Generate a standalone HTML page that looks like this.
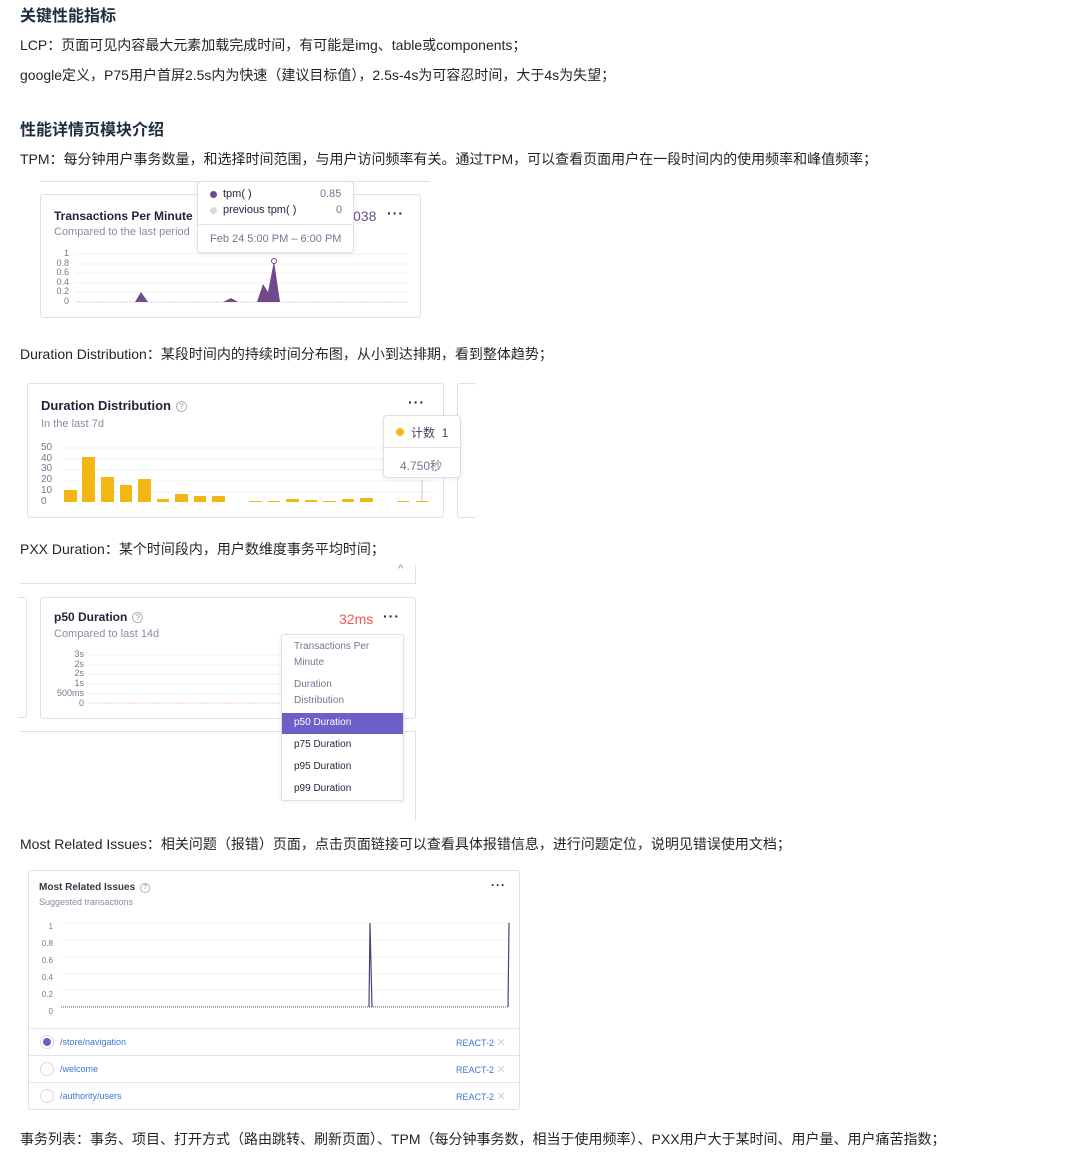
<!DOCTYPE html>
<html><head><meta charset="utf-8"><style>
*{margin:0;padding:0;box-sizing:border-box}
body{width:1078px;height:1161px;background:#fff;position:relative;overflow:hidden;font-family:"Liberation Sans","Noto Sans CJK SC",sans-serif;color:#1f2329}
.a{position:absolute;white-space:nowrap}
.t{font-size:14px;color:#1f2329}
.h{font-size:16px;font-weight:bold;color:#1f2d3d}
.card{position:absolute;border:1px solid #e2dee6;border-radius:3px;background:#fff}
.tt{font-size:12px;color:#2b1d38}
.sub{font-size:11px;color:#9386a0}
.ax{font-size:9px;color:#80708f;text-align:right;line-height:9.5px}
.dots{font-size:14px;color:#2b1d38;letter-spacing:1px;font-weight:bold}
.q{display:inline-block;width:11px;height:11px;border:1px solid #b5adbd;border-radius:50%;font-size:8px;color:#b5adbd;text-align:center;line-height:9px;vertical-align:1px;margin-left:5px}
</style></head><body>
<div class="a h" style="left:20px;top:2px">关键性能指标</div>
<div class="a t" style="left:20px;top:35px">LCP：页面可见内容最大元素加载完成时间，有可能是img、table或components；</div>
<div class="a t" style="left:20px;top:65px">google定义，P75用户首屏2.5s内为快速（建议目标值），2.5s-4s为可容忍时间，大于4s为失望；</div>
<div class="a h" style="left:20px;top:116px">性能详情页模块介绍</div>
<div class="a t" style="left:20px;top:149px">TPM：每分钟用户事务数量，和选择时间范围，与用户访问频率有关。通过TPM，可以查看页面用户在一段时间内的使用频率和峰值频率；</div>

<!-- card 1 -->
<div class="a" style="left:40px;top:181px;width:390px;height:1px;background:#e2dee6"></div>
<div class="card" style="left:40px;top:194px;width:381px;height:124px">
 <div class="a tt" style="left:13px;top:14px;font-weight:bold">Transactions Per Minute</div>
 <div class="a sub" style="left:13px;top:31px">Compared to the last period</div>
 <div class="a" style="left:312px;top:13px;font-size:14px;color:#6c4f8a">038</div>
 <div class="a dots" style="left:346px;top:10px">···</div>
 <div class="a ax" style="left:10px;top:54px;width:18px">1<br>0.8<br>0.6<br>0.4<br>0.2<br>0</div>
 <svg class="a" style="left:0;top:0" width="381" height="124">
  <g stroke="#f2eff5" stroke-width="1"><line x1="34" y1="59" x2="367" y2="59"/><line x1="34" y1="69" x2="367" y2="69"/><line x1="34" y1="78" x2="367" y2="78"/><line x1="34" y1="88" x2="367" y2="88"/><line x1="34" y1="97" x2="367" y2="97"/></g>
  <line x1="34" y1="107" x2="367" y2="107" stroke="#d8cfe0" stroke-dasharray="2 1"/>
  <path d="M94 107 L100 97 L107 107Z M182 107 L190 103 L197 107Z M216 107 L222 89 L227 97 L233 66 L239 107Z" fill="#6f4a8c"/>
  <circle cx="233" cy="66" r="2.5" fill="#fff" stroke="#6f4a8c"/>
 </svg>
</div>
<div class="card" style="left:197px;top:181px;width:157px;height:72px;border-radius:4px;box-shadow:0 1px 4px rgba(0,0,0,.08)">
 <div class="a" style="left:12px;top:9px;width:7px;height:7px;border-radius:50%;background:#6f4a8c"></div>
 <div class="a tt" style="left:25px;top:6px;font-size:11px">tpm( )</div>
 <div class="a" style="left:122px;top:6px;font-size:11px;color:#80708f">0.85</div>
 <div class="a" style="left:12px;top:25px;width:7px;height:7px;border-radius:50%;background:#dcd8e0"></div>
 <div class="a tt" style="left:25px;top:22px;font-size:11px">previous tpm( )</div>
 <div class="a" style="left:138px;top:22px;font-size:11px;color:#80708f">0</div>
 <div class="a" style="left:0;top:42px;width:155px;height:1px;background:#e7e3ea"></div>
 <div class="a" style="left:12px;top:51px;font-size:11px;color:#80708f">Feb 24 5:00 PM – 6:00 PM</div>
</div>

<div class="a t" style="left:20px;top:344px">Duration Distribution：某段时间内的持续时间分布图，从小到达排期，看到整体趋势；</div>
<!-- card 2 -->
<div class="card" style="left:27px;top:383px;width:417px;height:135px">
 <div class="a tt" style="left:13px;top:14px;font-size:13px;font-weight:bold">Duration Distribution<span class="q">?</span></div>
 <div class="a sub" style="left:13px;top:34px">In the last 7d</div>
 <div class="a dots" style="left:380px;top:10px">···</div>
 <div class="a ax" style="left:13px;top:59px;width:20px;font-size:10px;line-height:10.7px;text-align:left;color:#80708f">50<br>40<br>30<br>20<br>10<br>0</div>
 <svg class="a" style="left:0;top:0" width="417" height="135">
  <g stroke="#f2eff5"><line x1="34" y1="64" x2="405" y2="64"/><line x1="34" y1="75" x2="405" y2="75"/><line x1="34" y1="86" x2="405" y2="86"/><line x1="34" y1="97" x2="405" y2="97"/><line x1="34" y1="108" x2="405" y2="108"/></g>
  <g fill="#f2b712">
   <rect x="36" y="106" width="13" height="12"/><rect x="54" y="73" width="13" height="45"/><rect x="73" y="93" width="13" height="25"/><rect x="92" y="101" width="12" height="17"/><rect x="110" y="95" width="13" height="23"/><rect x="129" y="115" width="12" height="3"/><rect x="147" y="110" width="13" height="8"/><rect x="166" y="112" width="12" height="6"/><rect x="184" y="112" width="13" height="6"/><rect x="221" y="117" width="13" height="1"/><rect x="240" y="117" width="12" height="1"/><rect x="258" y="115" width="13" height="3"/><rect x="277" y="116" width="12" height="2"/><rect x="295" y="117" width="13" height="1"/><rect x="314" y="115" width="12" height="3"/><rect x="332" y="114" width="13" height="4"/><rect x="369" y="117" width="12" height="1"/><rect x="388" y="117" width="12" height="1"/>
  </g>
  <line x1="394" y1="96" x2="394" y2="117" stroke="#c9c2d0"/>
 </svg>
</div>
<div class="card" style="left:457px;top:383px;width:20px;height:135px;border-right:none"></div>
<div class="card" style="left:383px;top:415px;width:78px;height:63px;border-radius:4px;box-shadow:0 1px 4px rgba(0,0,0,.08)">
 <div class="a" style="left:12px;top:12px;width:8px;height:8px;border-radius:50%;background:#f2b712"></div>
 <div class="a" style="left:27px;top:8px;font-size:12px;color:#4a3d56">计数&nbsp; 1</div>
 <div class="a" style="left:0;top:31px;width:76px;height:1px;background:#e7e3ea"></div>
 <div class="a" style="left:16px;top:41px;font-size:12px;color:#80708f">4.750秒</div>
</div>

<div class="a t" style="left:20px;top:539px">PXX Duration：某个时间段内，用户数维度事务平均时间；</div>
<!-- card 3 -->
<div class="a" style="left:20px;top:583px;width:396px;height:1px;background:#e2dee6"></div>
<div class="a" style="left:415px;top:565px;width:1px;height:19px;background:#e2dee6"></div>
<div class="a" style="left:398px;top:563px;font-size:11px;color:#9386a0">^</div>
<div class="a" style="left:18px;top:597px;width:9px;height:121px;border:1px solid #e2dee6;border-left:none;border-radius:0 3px 3px 0"></div>
<div class="card" style="left:40px;top:597px;width:376px;height:122px">
 <div class="a tt" style="left:13px;top:12px;font-size:12px;font-weight:bold">p50 Duration<span class="q">?</span></div>
 <div class="a sub" style="left:13px;top:30px">Compared to last 14d</div>
 <div class="a" style="left:298px;top:13px;font-size:14px;color:#f55459">32ms</div>
 <div class="a dots" style="left:342px;top:10px">···</div>
 <div class="a ax" style="left:6px;top:52px;width:37px;line-height:9.7px">3s<br>2s<br>2s<br>1s<br>500ms<br>0</div>
 <svg class="a" style="left:0;top:0" width="376" height="122">
  <g stroke="#f2eff5"><line x1="48" y1="57" x2="360" y2="57"/><line x1="48" y1="67" x2="360" y2="67"/><line x1="48" y1="76" x2="360" y2="76"/><line x1="48" y1="86" x2="360" y2="86"/><line x1="48" y1="96" x2="360" y2="96"/></g>
  <line x1="48" y1="105" x2="360" y2="105" stroke="#f4c9cc" stroke-dasharray="2 1"/>
 </svg>
</div>
<div class="a" style="left:20px;top:731px;width:396px;height:90px;border-top:1px solid #e2dee6;border-right:1px solid #e2dee6"></div>
<div class="card" style="left:281px;top:634px;width:123px;height:167px;border-radius:3px;box-shadow:0 1px 4px rgba(0,0,0,.08);font-size:10px;color:#80708f">
 <div class="a" style="left:12px;top:4px;line-height:16px">Transactions Per<br>Minute</div>
 <div class="a" style="left:12px;top:42px;line-height:16px">Duration<br>Distribution</div>
 <div class="a" style="left:0;top:78px;width:121px;height:21px;background:#6c5fc7"></div>
 <div class="a" style="left:12px;top:82px;color:#fff">p50 Duration</div>
 <div class="a" style="left:12px;top:104px;color:#2b1d38">p75 Duration</div>
 <div class="a" style="left:12px;top:126px;color:#2b1d38">p95 Duration</div>
 <div class="a" style="left:12px;top:148px;color:#2b1d38">p99 Duration</div>
</div>

<div class="a t" style="left:20px;top:834px">Most Related Issues：相关问题（报错）页面，点击页面链接可以查看具体报错信息，进行问题定位，说明见错误使用文档；</div>
<!-- card 4 -->
<div class="card" style="left:28px;top:870px;width:492px;height:240px">
 <div class="a tt" style="left:10px;top:11px;font-size:10px;font-weight:bold;color:#3e3446">Most Related Issues<span class="q" style="width:10px;height:10px;font-size:7px;line-height:8px">?</span></div>
 <div class="a" style="left:10px;top:26px;font-size:9px;color:#9386a0">Suggested transactions</div>
 <div class="a dots" style="left:462px;top:7px;font-size:12px">···</div>
 <div class="a ax" style="left:4px;top:47px;width:20px;font-size:8px;line-height:17px;color:#80708f">1<br>0.8<br>0.6<br>0.4<br>0.2<br>0</div>
 <svg class="a" style="left:0;top:0" width="492" height="240">
  <g stroke="#f4f2f6"><line x1="32" y1="52" x2="482" y2="52"/><line x1="32" y1="69" x2="482" y2="69"/><line x1="32" y1="86" x2="482" y2="86"/><line x1="32" y1="103" x2="482" y2="103"/><line x1="32" y1="119" x2="482" y2="119"/></g>
  <path d="M340 136 L341 52 L343 136 M479 136 L480 52" fill="none" stroke="#444674" stroke-width="1.2"/>
  <line x1="32" y1="136" x2="480" y2="136" stroke="#444674" stroke-dasharray="1 1"/>
 </svg>
 <div class="a" style="left:0;top:157px;width:490px;height:1px;background:#e7e3ea"></div>
 <div class="a" style="left:0;top:184px;width:490px;height:1px;background:#e7e3ea"></div>
 <div class="a" style="left:0;top:211px;width:490px;height:1px;background:#e7e3ea"></div>
 <div class="a" style="left:11px;top:164px;width:14px;height:14px;border:1px solid #ddd8e2;border-radius:50%"><div style="margin:2px;width:8px;height:8px;border-radius:50%;background:#6c5fc7"></div></div>
 <div class="a" style="left:11px;top:191px;width:14px;height:14px;border:1px solid #ddd8e2;border-radius:50%"></div>
 <div class="a" style="left:11px;top:218px;width:14px;height:14px;border:1px solid #ddd8e2;border-radius:50%"></div>
 <div class="a" style="left:31px;top:166px;font-size:9px;color:#3d74db">/store/navigation</div>
 <div class="a" style="left:31px;top:193px;font-size:9px;color:#3d74db">/welcome</div>
 <div class="a" style="left:31px;top:220px;font-size:9px;color:#3d74db">/authority/users</div>
 <div class="a" style="left:427px;top:165px;font-size:9px;color:#3d74db">REACT-2 <span style="color:#d5d0da;font-size:11px">✕</span></div>
 <div class="a" style="left:427px;top:192px;font-size:9px;color:#3d74db">REACT-2 <span style="color:#d5d0da;font-size:11px">✕</span></div>
 <div class="a" style="left:427px;top:219px;font-size:9px;color:#3d74db">REACT-2 <span style="color:#d5d0da;font-size:11px">✕</span></div>
</div>

<div class="a t" style="left:20px;top:1129px">事务列表：事务、项目、打开方式（路由跳转、刷新页面）、TPM（每分钟事务数，相当于使用频率）、PXX用户大于某时间、用户量、用户痛苦指数；</div>
</body></html>
